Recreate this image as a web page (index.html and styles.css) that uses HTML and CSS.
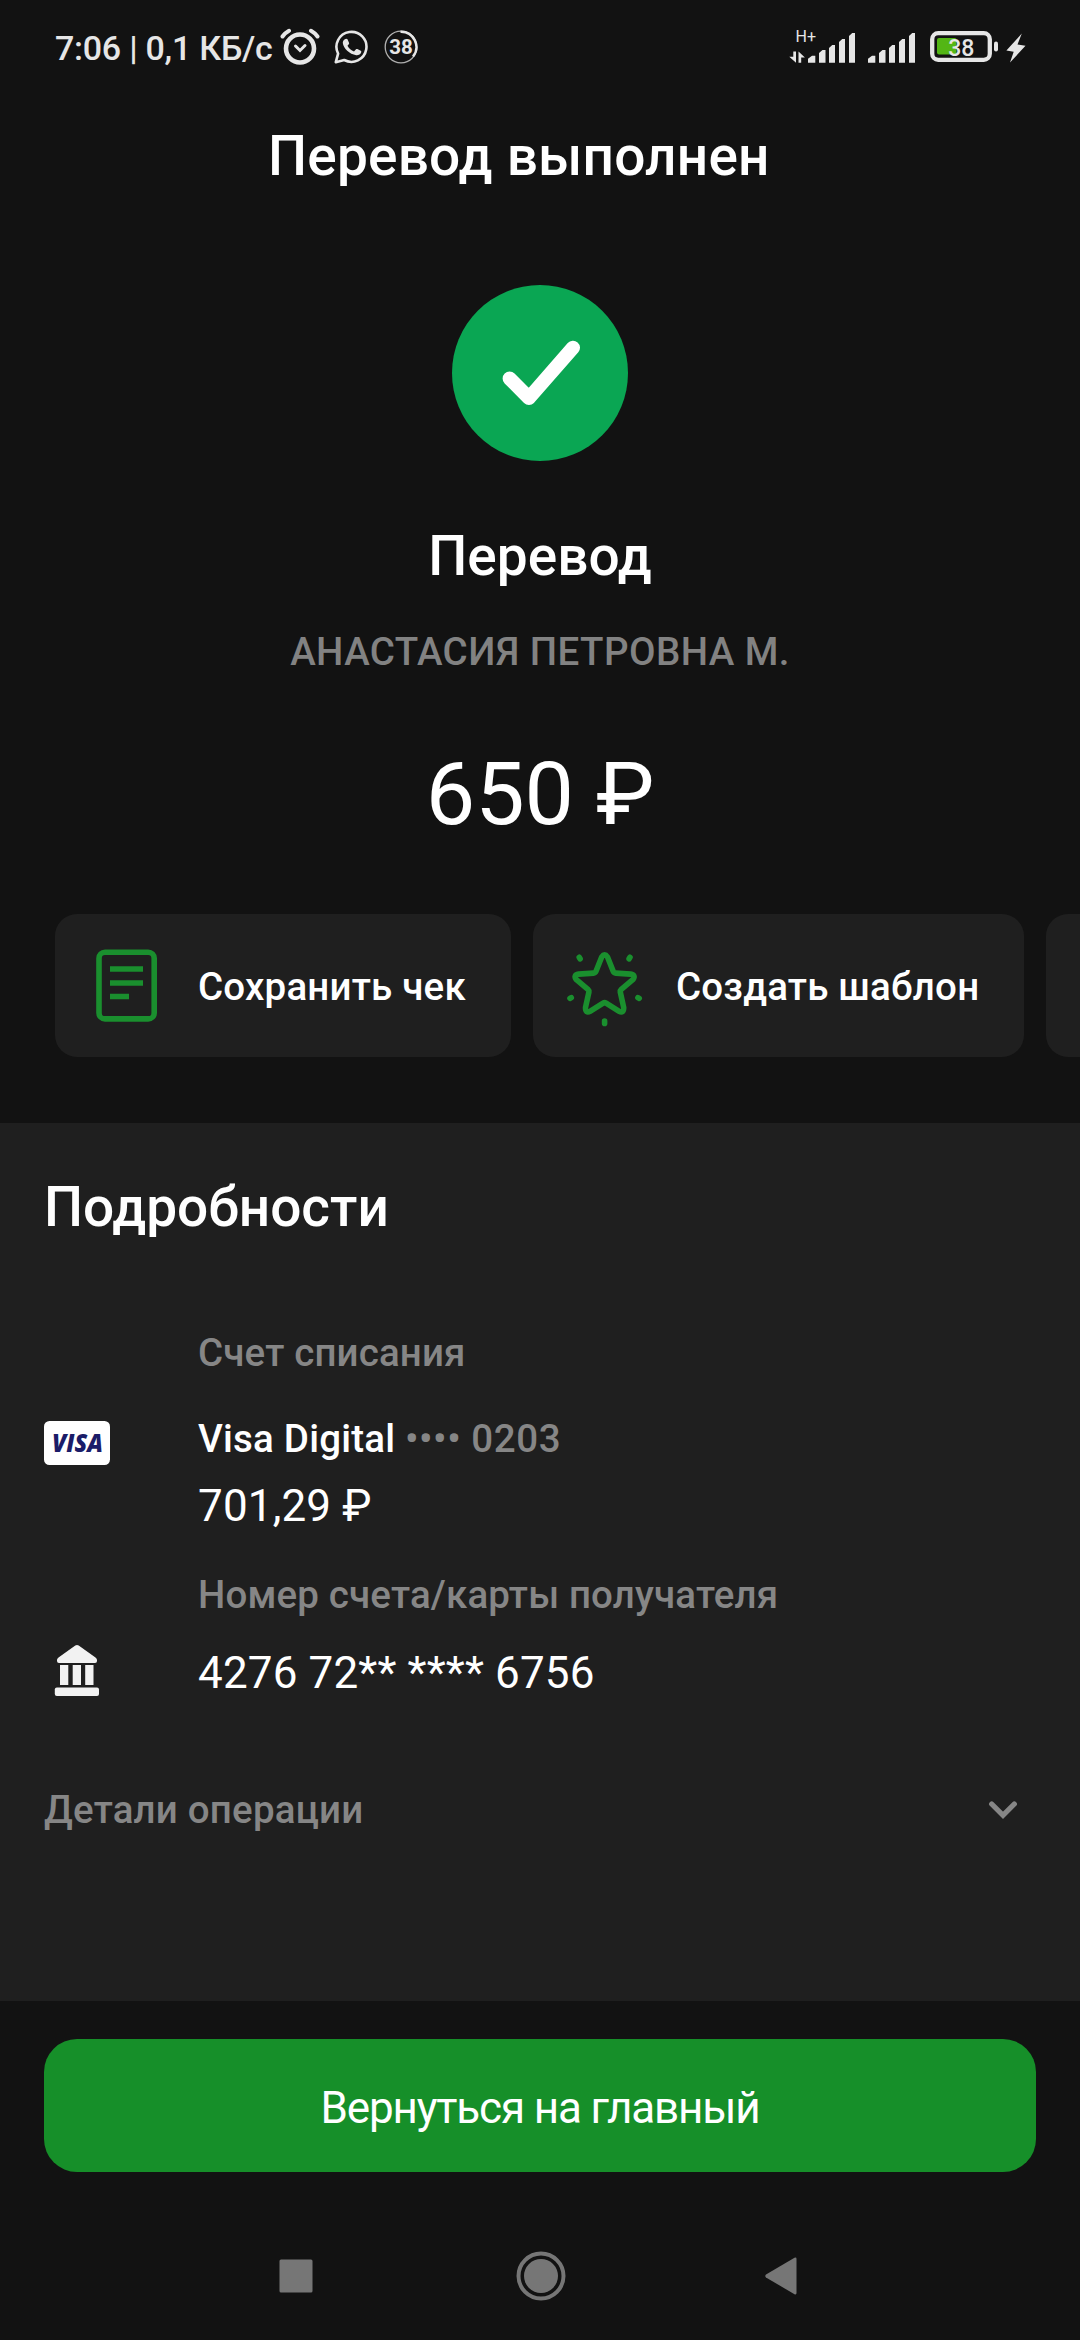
FILE: index.html
```html
<!DOCTYPE html>
<html lang="ru">
<head>
  <meta charset="UTF-8">
  <meta name="viewport" content="width=device-width, initial-scale=1.0">
  <title>Перевод выполнен</title>
  <link rel="stylesheet" href="styles.css">
</head>
<body>
  <div class="status-bar">
    <span class="status-time">7:06 | 0,1 КБ/с</span>
    <svg class="icon-alarm" width="40" height="38" viewBox="0 0 40 38" fill="none" stroke="#e6e6e6" stroke-linecap="round">
      <circle cx="20" cy="20.5" r="14" stroke-width="4.6"/>
      <path d="M2.5 8.5Q5 5 9 2.8M31 2.8Q35 5 37.5 8.5" stroke-width="4"/>
      <path d="M15.5 18l4.5 4.5 5-5" stroke-width="3"/>
    </svg>
    <svg class="icon-whatsapp" width="34" height="34" viewBox="0 0 34 34">
      <path d="M1.8 32.2l2.3-8.5A15 15 0 1 1 10.2 30z" fill="none" stroke="#e6e6e6" stroke-width="2.6" stroke-linejoin="round"/>
      <path d="M10.8 9.3c.7-.8 2.3-.8 2.7 0l1.6 3.7c.2.6-.1 1.2-1.6 2.8 1.5 2.8 3.7 4.7 6.5 5.8l2-2.3c.4-.5.9-.5 1.4-.3l3.3 1.7c.7.4.7.9.4 1.9-.6 1.9-2.9 3-4.9 2.7-6.7-1-12.8-6.7-13.4-12.2-.1-1.6.8-3 2-3.8z" fill="#e6e6e6"/>
    </svg>
    <svg class="icon-level" width="34" height="34" viewBox="0 0 34 34">
      <circle cx="17" cy="17" r="15.8" fill="none" stroke="#b0b0b0" stroke-width="1.3"/>
      <path d="M16.5 1.7A15.3 15.3 0 0 1 29 26.5" fill="none" stroke="#e6e6e6" stroke-width="2.4"/>
      <text class="level-text" x="17" y="24.3" text-anchor="middle">38</text>
    </svg>
    <div class="status-right">
      <svg width="70" height="36" viewBox="0 0 70 36" fill="#e6e6e6">
        <text class="network-text" x="7.5" y="14">H+</text>
        <path d="M5.3 23.500h2.7v11.2L1.3 28.800h4zM10.5 23.500l6.4 5.900h-3.700v5.300h-2.700z"/>
        <path d="M20 34.800v-4l4-3h3.300v7zM31 34.800V25l3.500-3h3v12.800zM41 34.800V20l3.200-3H47v17.800zM51 34.800V14l3.200-3H57v23.800zM61 34.800V8l3.200-3H67v29.800z"/>
      </svg>
      <svg width="62" height="36" viewBox="0 0 62 36" fill="#e6e6e6">
        <path d="M10 34.800v-4l4-3h3.300v7zM21 34.800V25l3.500-3h3v12.800zM31 34.800V20l3.200-3H37v17.800zM41 34.800V14l3.200-3H47v23.800zM51 34.800V8l3.200-3H57v29.800z"/>
      </svg>
      <svg class="icon-battery" width="70" height="32" viewBox="0 0 70 32">
        <rect x="2.2" y="3.2" width="57.6" height="26.6" rx="6" fill="none" stroke="#e6e6e6" stroke-width="4.3"/>
        <rect x="7" y="8" width="19.5" height="16.5" rx="2" fill="#53b615"/>
        <rect x="64" y="11.5" width="4" height="10" rx="2" fill="#e6e6e6"/>
        <text class="battery-text" x="31.3" y="25.5" text-anchor="middle">38</text>
      </svg>
      <svg class="icon-bolt" width="20" height="30" viewBox="0 0 20 30" fill="#e6e6e6">
        <path d="M15.8.5L.4 17.500l7.300 1.200L4 29.500 19.500 12.800l-8-1.300z"/>
      </svg>
    </div>
  </div>

  <header class="header">
    <h1 class="title">Перевод выполнен</h1>
  </header>

  <main>
    <section class="result">
      <svg class="result-icon" width="176" height="176" viewBox="0 0 176 176">
        <circle cx="88" cy="88" r="88" fill="#0aa653"/>
        <path d="M57.6 93.5L77 113l44-50.300" fill="none" stroke="#fff" stroke-width="14" stroke-linecap="round" stroke-linejoin="round"/>
      </svg>
      <h2 class="result-title">Перевод</h2>
      <p class="recipient">АНАСТАСИЯ ПЕТРОВНА М.</p>
      <p class="amount">650 ₽</p>
    </section>

    <div class="actions">
      <button class="action">
        <svg class="action-icon" width="143" height="143" viewBox="0 0 143 143" fill="none" stroke="#1a8f2e" stroke-width="5.6">
          <rect x="44" y="38.3" width="55.2" height="66.6" rx="6"/>
          <path d="M55 55h33M55 69h33M55 82.500h19"/>
        </svg>
        <span class="action-text">Сохранить чек</span>
      </button>
      <button class="action">
        <svg class="action-icon" width="143" height="143" viewBox="0 0 143 143" fill="none" stroke="#1a8f2e" stroke-width="5.6" stroke-linecap="round" stroke-linejoin="round">
          <path d="M68.7 43Q71.6 38.8 74.5 43L80.2 57.3Q80.9 59 82.7 59.1L97.5 60.1Q103.3 61.2 99.8 65.7L88.3 75.3Q87 76.5 87.3 78.2L90.7 93.5Q91 99.5 85.8 97.2L73.1 89.1Q71.6 88.2 70.1 89.1L57.4 97.2Q52.2 99.5 52.5 93.5L55.9 78.2Q56.2 76.5 54.9 75.3L43.4 65.7Q39.9 61.2 45.7 60.1L60.5 59.1Q62.3 59 63 57.3Z"/>
          <path d="M46.2 43.3l.9 1.5M97 43.3l-.9 1.5M38.3 83.6l-1.3.8M104.9 83.6l1.3.8M71.6 107v2.4"/>
        </svg>
        <span class="action-text">Создать шаблон</span>
      </button>
      <div class="action action-next"></div>
    </div>

    <section class="details">
      <h2 class="details-title">Подробности</h2>
      <div class="detail-list">
        <p class="label">Счет списания</p>
        <svg class="icon-visa" width="66" height="44" viewBox="0 0 66 44">
          <rect width="66" height="44" rx="5.5" fill="#fff"/>
          <text class="visa-text" x="8" y="30.700" textLength="51" lengthAdjust="spacingAndGlyphs">VISA</text>
        </svg>
        <p class="account">Visa Digital <span class="account-mask">•••• 0203</span></p>
        <p class="value balance">701,29 ₽</p>
        <p class="label label-recipient">Номер счета/карты получателя</p>
        <svg class="icon-bank" width="46" height="52" viewBox="0 0 46 52" fill="#f2f2f2">
          <path d="M21.3.6q1.700-1.200 3.400 0L41.500 12.500q1.500 1 1.500 2.500v1q0 2-2 2H5q-2 0-2-2v-1q0-1.500 1.500-2.500z"/>
          <path d="M6 20h8.300v20H6zM18.700 20H27v20h-8.300zM31.200 20h8.300v20h-8.300z"/>
          <rect x=".8" y="42.5" width="44.2" height="8.5" rx="2"/>
        </svg>
        <p class="value card-number">4276 72** **** 6756</p>
      </div>
      <div class="more">
        <span>Детали операции</span>
        <svg width="30" height="20" viewBox="0 0 30 20" fill="none" stroke="#868686" stroke-width="5.3" stroke-linecap="round">
          <path d="M3.700 4L15 15.300 26.300 4"/>
        </svg>
      </div>
    </section>
  </main>

  <footer class="footer">
    <button class="main-button">Вернуться на главный</button>
    <nav class="nav-bar">
      <svg width="34" height="50" viewBox="0 0 34 50" fill="#767676"><rect x=".5" y="8.5" width="33" height="33" rx="1.5"/></svg>
      <svg class="nav-home" width="50" height="50" viewBox="0 0 50 50" fill="#767676">
        <circle cx="25" cy="25" r="22.5" fill="none" stroke="#767676" stroke-width="4"/>
        <circle cx="25" cy="25" r="17"/>
      </svg>
      <svg width="32" height="50" viewBox="0 0 32 50" fill="#767676"><path d="M1 23.500L29.500 6.800q2-.8 2 1.200v34q0 2-2 1.200L1 26.500q-1.500-1.500 0-3z"/></svg>
    </nav>
  </footer>
</body>
</html>
```
FILE: styles.css
```css
/* Base styles */
body {
  margin: 0;
  width: 1080px;
  height: 2340px;
  overflow: hidden;
  background-color: #121212;
  color: #fff;
  font-family: Roboto, sans-serif;
}
h1, h2, p {
  margin: 0;
  font-weight: 500;
}
button {
  border: none;
  color: #fff;
  font-family: inherit;
  cursor: pointer;
}
svg {
  display: block;
  flex: none;
}

/* Status bar */
.status-bar {
  display: flex;
  align-items: flex-start;
  box-sizing: border-box;
  height: 92px;
  padding: 28px 54px 0 55px;
}
.status-time {
  width: 225px;
  color: #e6e6e6;
  font-size: 34px;
  font-weight: 500;
  letter-spacing: -0.25px;
  line-height: 40px;
  white-space: nowrap;
}
.icon-whatsapp {
  margin: 2px 0 0 14px;
}
.icon-level {
  margin: 2px 0 0 16px;
}
.level-text {
  fill: #e6e6e6;
  font-size: 20.5px;
  font-weight: 700;
}
.status-right {
  display: flex;
  align-items: flex-start;
  margin-left: auto;
}
.network-text {
  font-size: 16px;
}
.icon-battery {
  margin: 2px 0 0 10px;
}
.battery-text {
  fill: #e6e6e6;
  font-size: 23px;
  font-weight: 500;
}
.icon-bolt {
  margin: 5px 0 0 6px;
}

/* Header */
.header {
  padding: 32px 0 0 268px;
}
.title,
.result-title,
.details-title {
  font-size: 55px;
  line-height: 64px;
}
.title {
  letter-spacing: 0.2px;
}

/* Transfer result */
.result {
  display: flex;
  flex-direction: column;
  align-items: center;
  padding-top: 97px;
}
.result-title {
  margin-top: 63px;
}
.recipient {
  margin-top: 41px;
  color: #828282;
  font-size: 38.5px;
  letter-spacing: 0.42px;
  line-height: 46px;
}
.amount {
  margin-top: 67px;
  font-size: 88px;
  font-weight: 400;
  line-height: 104px;
}

/* Quick actions */
.actions {
  display: flex;
  gap: 22px;
  margin-top: 68px;
  padding-left: 55px;
  overflow: hidden;
}
.action {
  display: flex;
  flex: none;
  align-items: center;
  height: 143px;
  padding: 0 45px 0 0;
  border-radius: 22px;
  background-color: #1f1f1f;
  font-size: 38.5px;
  font-weight: 500;
  letter-spacing: 0.2px;
  line-height: 46px;
  white-space: nowrap;
}
.action-text {
  padding-top: 3px;
}
.action-next {
  width: 400px;
}

/* Details */
.details {
  box-sizing: border-box;
  height: 878px;
  margin-top: 66px;
  padding: 52px 62px 0 44px;
  background-color: #1f1f1f;
}
.detail-list {
  display: grid;
  grid-template-columns: 154px 1fr;
  margin-top: 91px;
}
.label,
.value {
  grid-column: 2;
}
.label {
  color: #868686;
  font-size: 38.5px;
  letter-spacing: 0.15px;
  line-height: 46px;
}
.icon-visa {
  margin-top: 45px;
}
.visa-text {
  fill: #1b1c68;
  font-family: "Open Sans", sans-serif;
  font-size: 24px;
  font-style: italic;
  font-weight: 800;
}
.account {
  margin-top: 40px;
  font-size: 38.5px;
  letter-spacing: 0.2px;
  line-height: 46px;
}
.account-mask {
  color: #868686;
  letter-spacing: 0.6px;
}
.value {
  font-size: 44px;
  font-weight: 400;
  letter-spacing: 0.15px;
  line-height: 52px;
}
.balance {
  margin-top: 15px;
}
.label-recipient {
  margin-top: 40px;
}
.icon-bank {
  margin: 27px 0 0 10px;
}
.card-number {
  margin-top: 29px;
}
.more {
  display: flex;
  align-items: center;
  justify-content: space-between;
  margin-top: 88px;
  color: #868686;
  font-size: 38.5px;
  font-weight: 500;
  letter-spacing: 0.2px;
  line-height: 46px;
}

/* Footer */
.footer {
  padding: 38px 44px 0;
}
.main-button {
  display: block;
  width: 100%;
  height: 133px;
  padding: 4px 0 0;
  border-radius: 33px;
  background-color: #168f29;
  font-size: 44px;
  letter-spacing: -1.15px;
  line-height: 52px;
}
.nav-bar {
  display: flex;
  justify-content: space-between;
  margin-top: 79px;
  padding: 0 239px 0 235px;
}
.nav-home {
  margin-left: 3px;
}
```
